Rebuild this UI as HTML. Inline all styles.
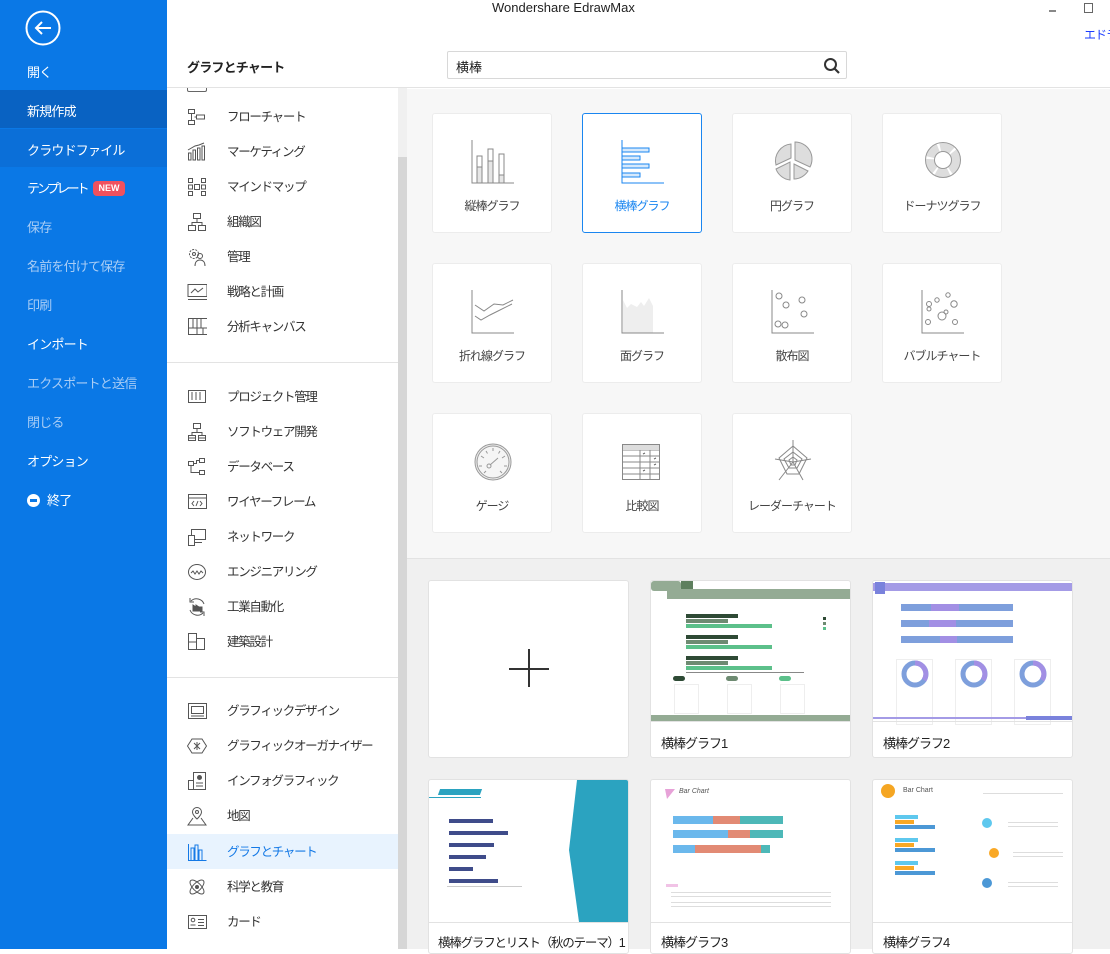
<!DOCTYPE html>
<html><head><meta charset="utf-8"><style>
*{margin:0;padding:0;box-sizing:border-box}
body{width:1110px;height:949px;overflow:hidden;position:relative;background:#fff;font-family:"Liberation Sans","Noto Sans CJK JP",sans-serif;color:#333;white-space:nowrap}
.abs{position:absolute}
#side{left:0;top:0;width:167px;height:949px;background:#0a78e6}
#side .it{position:absolute;left:27px;font-size:13px;letter-spacing:-0.8px;color:#fff;line-height:20px}
#side .dim{color:#a9cdf5}
.band{position:absolute;left:0;width:167px;height:38px}
#cat .ci{position:absolute;left:187px;height:20px;font-size:12.5px;letter-spacing:-1.3px;color:#333;line-height:20px;width:210px}
#cat .ci svg{position:absolute;left:0;top:0}
#cat .ci span{position:absolute;left:40px;top:0}
.card{position:absolute;width:120px;height:120px;background:#fff;border:1px solid #ececec;border-radius:3px}
.card .lb{position:absolute;left:0;right:0;top:83px;text-align:center;font-size:12px;letter-spacing:-1px;color:#444}
.card svg{position:absolute;left:36px;top:24px}
.tp{position:absolute;width:201px;background:#fff;border:1px solid #e2e2e2;border-radius:3px;overflow:hidden}
.tp .lb{position:absolute;left:10px;font-size:13px;letter-spacing:-1px;color:#222}
.ln{position:absolute;height:1px;background:#ddd}
</style></head><body>

<div id="side" class="abs">
  <svg class="abs" style="left:25px;top:10px" width="36" height="36" viewBox="0 0 36 36"><circle cx="18" cy="18" r="16.5" fill="none" stroke="#fff" stroke-width="2"/><path d="M26 18H11M17 12l-6 6 6 6" fill="none" stroke="#fff" stroke-width="2"/></svg>
  <div class="band" style="top:90px;background:#0962c2"></div>
  <div class="band" style="top:129px;background:#0b6fd8;height:38px"></div>
  <div class="it" style="top:63px">開く</div>
  <div class="it" style="top:102px">新規作成</div>
  <div class="it" style="top:141px">クラウドファイル</div>
  <div class="it" style="top:179px;letter-spacing:-3px">テンプレート</div>
  <div class="abs" style="left:93px;top:181px;width:32px;height:15px;background:#f0515e;border-radius:4px;color:#fff;font-size:9px;font-weight:bold;line-height:15px;text-align:center">NEW</div>
  <div class="it dim" style="top:218px">保存</div>
  <div class="it dim" style="top:257px">名前を付けて保存</div>
  <div class="it dim" style="top:296px">印刷</div>
  <div class="it" style="top:335px">インポート</div>
  <div class="it dim" style="top:374px">エクスポートと送信</div>
  <div class="it dim" style="top:413px">閉じる</div>
  <div class="it" style="top:452px">オプション</div>
  <div class="abs" style="left:27px;top:494px;width:13px;height:13px;border-radius:50%;background:#fff"><div style="position:absolute;left:3px;top:5px;width:7px;height:3px;background:#0a78e6"></div></div>
  <div class="it" style="top:491px;left:47px">終了</div>
</div>

<div class="abs" style="left:167px;top:0;width:943px;height:88px;background:#fff;border-bottom:1px solid #e3e3e3"></div>
<div class="abs" style="left:492px;top:0;font-size:13px;color:#222">Wondershare EdrawMax</div>
<div class="abs" style="left:1049px;top:10px;width:7px;height:2px;background:#888"></div>
<div class="abs" style="left:1084px;top:3px;width:9px;height:10px;border:1px solid #666"></div>
<div class="abs" style="left:1084px;top:26px;font-size:12px;letter-spacing:-1px;color:#1a3cff">エドラ</div>
<div class="abs" style="left:187px;top:57px;font-size:13px;letter-spacing:-0.8px;font-weight:bold;color:#222">グラフとチャート</div>
<div class="abs" style="left:447px;top:51px;width:400px;height:28px;border:1px solid #d8d8d8;border-radius:2px;background:#fff">
  <div class="abs" style="left:8px;top:5px;font-size:13px;color:#222">横棒</div>
  <svg class="abs" style="left:375px;top:5px" width="18" height="18" viewBox="0 0 18 18"><circle cx="7.5" cy="7.5" r="5.5" fill="none" stroke="#333" stroke-width="2"/><path d="M11.5 11.5L16 16" stroke="#333" stroke-width="2.2"/></svg>
</div>

<div id="cat">
  <div class="abs" style="left:187px;top:88px;width:20px;height:4px;border:1px solid #666;border-top:none;border-radius:0 0 2px 2px"></div>
  <div class="abs" style="left:398px;top:88px;width:9px;height:861px;background:#f0f0f0"></div>
  <div class="abs" style="left:398px;top:157px;width:9px;height:792px;background:#d6d6d6"></div>
  <div class="abs" style="left:167px;top:362px;width:231px;height:1px;background:#e3e3e3"></div>
  <div class="abs" style="left:167px;top:677px;width:231px;height:1px;background:#e3e3e3"></div>
  <div class="abs" style="left:167px;top:834px;width:231px;height:35px;background:#e8f3fe"></div>

  <div class="ci" style="top:107px"><svg width="20" height="20" viewBox="0 0 20 20" fill="none" stroke="#555"><rect x="1.5" y="2.5" width="6" height="4"/><rect x="1.5" y="13.5" width="6" height="4"/><rect x="9.5" y="8" width="8" height="4"/><path d="M4.5 6.5v7M7.5 10h2"/></svg><span>フローチャート</span></div>
  <div class="ci" style="top:142px"><svg width="20" height="20" viewBox="0 0 20 20" fill="none" stroke="#555"><rect x="1.5" y="11" width="2.5" height="7"/><rect x="6" y="8" width="2.5" height="10"/><rect x="10.5" y="6" width="2.5" height="12"/><rect x="15" y="4" width="2.5" height="14"/><path d="M1 8L8 4l4-1 5-2"/></svg><span>マーケティング</span></div>
  <div class="ci" style="top:177px"><svg width="20" height="20" viewBox="0 0 20 20" fill="none" stroke="#555"><rect x="1.5" y="1.5" width="4" height="4"/><rect x="14.5" y="1.5" width="4" height="4"/><rect x="1.5" y="14.5" width="4" height="4"/><rect x="14.5" y="14.5" width="4" height="4"/><rect x="7.5" y="7.5" width="5" height="5"/><rect x="1.5" y="8" width="4" height="4"/><rect x="14.5" y="8" width="4" height="4"/></svg><span>マインドマップ</span></div>
  <div class="ci" style="top:212px"><svg width="20" height="20" viewBox="0 0 20 20" fill="none" stroke="#555"><rect x="6.5" y="1.5" width="7" height="5"/><rect x="1.5" y="13.5" width="7" height="5"/><rect x="11.5" y="13.5" width="7" height="5"/><path d="M10 6.5v4M5 13.5v-3h10v3"/></svg><span>組織図</span></div>
  <div class="ci" style="top:247px"><svg width="20" height="20" viewBox="0 0 20 20" fill="none" stroke="#555"><circle cx="7" cy="7" r="4.5" stroke-dasharray="2 1.2"/><circle cx="7" cy="7" r="1.5"/><circle cx="13" cy="9" r="2.5"/><path d="M8 19c0-4 2-6 5-6s5 2 5 6"/></svg><span>管理</span></div>
  <div class="ci" style="top:282px"><svg width="20" height="20" viewBox="0 0 20 20" fill="none" stroke="#555"><rect x="1" y="2.5" width="19" height="12"/><path d="M1 17.5h19M4 11l4-4 3 3 5-4"/></svg><span>戦略と計画</span></div>
  <div class="ci" style="top:317px"><svg width="20" height="20" viewBox="0 0 20 20" fill="none" stroke="#555"><rect x="1.5" y="1.5" width="19" height="16"/><path d="M1.5 11h19M6 1.5v10M10 1.5v16M14 1.5v10M16 11v6.5"/></svg><span>分析キャンバス</span></div>

  <div class="ci" style="top:387px"><svg width="20" height="20" viewBox="0 0 20 20" fill="none" stroke="#555"><rect x="1.5" y="3.5" width="17" height="12"/><path d="M5 7v6M9 7v6M13 7v6M4 6h2M8 6h2M12 6h2"/></svg><span>プロジェクト管理</span></div>
  <div class="ci" style="top:422px"><svg width="20" height="20" viewBox="0 0 20 20" fill="none" stroke="#555"><rect x="6.5" y="1.5" width="7" height="5"/><rect x="1.5" y="13.5" width="7" height="5"/><rect x="11.5" y="13.5" width="7" height="5"/><path d="M10 6.5v4M5 13.5v-3h10v3M1.5 16h7M11.5 16h7"/></svg><span>ソフトウェア開発</span></div>
  <div class="ci" style="top:457px"><svg width="20" height="20" viewBox="0 0 20 20" fill="none" stroke="#555"><rect x="1.5" y="4.5" width="5" height="4"/><rect x="12.5" y="1.5" width="5" height="4"/><rect x="12.5" y="13.5" width="5" height="4"/><path d="M6.5 6.5h3v-3h3M4 8.5v7h8.5"/></svg><span>データベース</span></div>
  <div class="ci" style="top:492px"><svg width="20" height="20" viewBox="0 0 20 20" fill="none" stroke="#555"><rect x="1.5" y="2.5" width="18" height="14"/><path d="M1.5 6h18M7 9l-2 2.5 2 2.5M13 9l2 2.5-2 2.5M11 9l-2 5"/></svg><span>ワイヤーフレーム</span></div>
  <div class="ci" style="top:527px"><svg width="20" height="20" viewBox="0 0 20 20" fill="none" stroke="#555"><rect x="4.5" y="2.5" width="14" height="10"/><rect x="1.5" y="8.5" width="6" height="10" fill="#fff"/><path d="M8 15.5h7"/></svg><span>ネットワーク</span></div>
  <div class="ci" style="top:562px"><svg width="20" height="20" viewBox="0 0 20 20" fill="none" stroke="#555"><ellipse cx="10" cy="10" rx="8.5" ry="7.5"/><path d="M4 11l2-2 2 3 2-3 2 3 2-3 2 2"/></svg><span>エンジニアリング</span></div>
  <div class="ci" style="top:597px"><svg width="20" height="20" viewBox="0 0 20 20" fill="none" stroke="#555"><path d="M4 4a8 8 0 0 1 13 3M16 16a8 8 0 0 1-13-3M3 1v4h4M17 19v-4h-4"/><path d="M6 14V8l3 2V8l3 2h3v4z" fill="#555"/></svg><span>工業自動化</span></div>
  <div class="ci" style="top:632px"><svg width="20" height="20" viewBox="0 0 20 20" fill="none" stroke="#555"><path d="M1.5 1.5h8v5h8v11h-16zM1.5 10h8v7.5M9.5 6.5v3"/></svg><span>建築設計</span></div>

  <div class="ci" style="top:701px"><svg width="20" height="20" viewBox="0 0 20 20" fill="none" stroke="#555"><rect x="1.5" y="2.5" width="18" height="15"/><rect x="4.5" y="5.5" width="12" height="7"/><path d="M4 15h13"/></svg><span>グラフィックデザイン</span></div>
  <div class="ci" style="top:736px"><svg width="20" height="20" viewBox="0 0 20 20" fill="none" stroke="#555"><path d="M5 3h10l4.5 7-4.5 7H5L.5 10z"/><path d="M7 7l6 6M13 7l-6 6M10 6v8"/></svg><span>グラフィックオーガナイザー</span></div>
  <div class="ci" style="top:771px"><svg width="20" height="20" viewBox="0 0 20 20" fill="none" stroke="#555"><rect x="6.5" y="1.5" width="12" height="17"/><path d="M1.5 9.5h5v9h-5zM9 12h7M9 15h7"/><circle cx="12.5" cy="6.5" r="2" fill="#555"/></svg><span>インフォグラフィック</span></div>
  <div class="ci" style="top:806px"><svg width="20" height="20" viewBox="0 0 20 20" fill="none" stroke="#555"><path d="M10 13s-4.5-4-4.5-7a4.5 4.5 0 0 1 9 0c0 3-4.5 7-4.5 7z"/><circle cx="10" cy="6" r="1.5"/><path d="M6 12l-5 7h18l-5-7"/></svg><span>地図</span></div>
  <div class="ci" style="top:842px;color:#1479e6"><svg width="20" height="20" viewBox="0 0 20 20" fill="none" stroke="#1479e6"><path d="M1.5 2v16.5h18"/><rect x="4" y="6" width="3" height="12.5"/><rect x="8" y="3" width="3" height="15.5"/><rect x="12" y="8" width="3" height="10.5"/></svg><span>グラフとチャート</span></div>
  <div class="ci" style="top:877px"><svg width="20" height="20" viewBox="0 0 20 20" fill="none" stroke="#555"><ellipse cx="10" cy="10" rx="9" ry="4" transform="rotate(45 10 10)"/><ellipse cx="10" cy="10" rx="9" ry="4" transform="rotate(-45 10 10)"/><circle cx="10" cy="10" r="1.5" fill="#555"/></svg><span>科学と教育</span></div>
  <div class="ci" style="top:912px"><svg width="20" height="20" viewBox="0 0 20 20" fill="none" stroke="#555"><rect x="1.5" y="3.5" width="18" height="13"/><circle cx="6" cy="8" r="1.8"/><path d="M3.5 13h5M11 7.5h6M11 10.5h6M11 13.5h6"/></svg><span>カード</span></div>
</div>

<div class="abs" style="left:407px;top:89px;width:703px;height:470px;background:#f7f7f7;border-bottom:1px solid #e3e3e3"></div>
<div class="abs" style="left:407px;top:559px;width:703px;height:390px;background:#f0f0f0"></div>

<div class="card" style="left:432px;top:113px"><svg width="48" height="48" viewBox="0 0 48 48" fill="none" stroke="#888"><path d="M3 2v43h42"/><rect x="8" y="18" width="5" height="27"/><rect x="19" y="11" width="5" height="34"/><rect x="30" y="16" width="5" height="29"/><path d="M8 29h5M19 23h5M30 37h5"/><path d="M8.5 29.5h4v15h-4zM19.5 23.5h4v21h-4zM30.5 37.5h4v7h-4z" fill="#e6e6e6" stroke="none"/></svg><div class="lb">縦棒グラフ</div></div>
<div class="card" style="left:582px;top:113px;border:1px solid #1a86f0"><svg width="48" height="48" viewBox="0 0 48 48" fill="none" stroke="#1a86f0"><path d="M3 2v43h42"/><rect x="3" y="10" width="27" height="4" fill="#d6e9fc"/><rect x="3" y="18" width="18" height="4" fill="#d6e9fc"/><rect x="3" y="26" width="27" height="4" fill="#d6e9fc"/><rect x="3" y="35" width="18" height="4" fill="#d6e9fc"/></svg><div class="lb" style="color:#1a86f0">横棒グラフ</div></div>
<div class="card" style="left:732px;top:113px"><svg width="48" height="48" viewBox="0 0 48 48" stroke="#999" fill="#ddd"><path d="M26 4a17 17 0 0 1 15 25L26 22z"/><path d="M22 6L22 20 7 27A17 17 0 0 1 22 6z"/><path d="M7 31l14-7v18A17 17 0 0 1 7 31z"/><path d="M25 26l14 7A17 17 0 0 1 25 41z"/></svg><div class="lb">円グラフ</div></div>
<div class="card" style="left:882px;top:113px"><svg width="48" height="48" viewBox="0 0 48 48" fill="none"><circle cx="24" cy="22" r="13" stroke="#ddd" stroke-width="9" stroke-dasharray="12.5 2"/><circle cx="24" cy="22" r="17.5" stroke="#999"/><circle cx="24" cy="22" r="8.5" stroke="#999"/></svg><div class="lb">ドーナツグラフ</div></div>

<div class="card" style="left:432px;top:263px"><svg width="48" height="48" viewBox="0 0 48 48" fill="none" stroke="#888"><path d="M3 2v43h42"/><path d="M6 17l9 6 10-7 9 1 10-5M6 28l6 4 9-5 8-4 14-7"/></svg><div class="lb">折れ線グラフ</div></div>
<div class="card" style="left:582px;top:263px"><svg width="48" height="48" viewBox="0 0 48 48" fill="none" stroke="#888"><path d="M4 12l4 8 4-4 6 3 4-5 3 4 5-8 4 8v27H4z" fill="#eee" stroke="none"/><path d="M3 2v43h42"/></svg><div class="lb">面グラフ</div></div>
<div class="card" style="left:732px;top:263px"><svg width="48" height="48" viewBox="0 0 48 48" fill="none" stroke="#888"><path d="M3 2v43h42"/><circle cx="10" cy="8" r="3"/><circle cx="17" cy="17" r="3"/><circle cx="33" cy="12" r="3"/><circle cx="35" cy="26" r="3"/><circle cx="9" cy="36" r="3"/><circle cx="16" cy="37" r="3"/></svg><div class="lb">散布図</div></div>
<div class="card" style="left:882px;top:263px"><svg width="48" height="48" viewBox="0 0 48 48" fill="none" stroke="#888"><path d="M3 2v43h42"/><circle cx="10" cy="16" r="2.5"/><circle cx="10" cy="21" r="2"/><circle cx="18" cy="12" r="2.2"/><circle cx="29" cy="7" r="2.2"/><circle cx="35" cy="16" r="3.2"/><circle cx="23" cy="28" r="4"/><circle cx="27" cy="24" r="2"/><circle cx="9" cy="34" r="2.5"/><circle cx="36" cy="34" r="2.5"/></svg><div class="lb">バブルチャート</div></div>

<div class="card" style="left:432px;top:413px"><svg width="48" height="48" viewBox="0 0 48 48" fill="none" stroke="#999"><circle cx="24" cy="24" r="18" fill="#eee"/><circle cx="24" cy="24" r="16" fill="#f5f5f5"/><path d="M24 10v3M12 18l3 2M36 18l-3 2M10 28h3M35 28h3M15 35l2-2M33 35l-2-2M17 13l1.5 2.5M31 13l-1.5 2.5"/><circle cx="20" cy="28" r="2"/><path d="M21 27l8-7"/></svg><div class="lb">ゲージ</div></div>
<div class="card" style="left:582px;top:413px"><svg width="48" height="48" viewBox="0 0 48 48" fill="none" stroke="#888"><rect x="3.5" y="6.5" width="37" height="35"/><path d="M3.5 12h37M3.5 18h37M3.5 24h37M3.5 30h37M3.5 36h37M21 6.5v35M31 6.5v35"/><rect x="4" y="7" width="36" height="5" fill="#ddd" stroke="none"/><path d="M24 16l2-1M35 21l2-1M35 27l2-1M24 33l2-1" stroke="#666"/></svg><div class="lb">比較図</div></div>
<div class="card" style="left:732px;top:413px"><svg width="48" height="48" viewBox="0 0 48 48" fill="none" stroke="#888"><path d="M24 2v22M24 24l18-3M24 24l10 18M24 24l-14 18M24 24L6 21"/><path d="M24 8l14 12-8 16H18L10 20z"/><path d="M24 14l9 7-5 9h-8l-5-9z"/><path d="M24 19l4 3-2 5h-4l-2-5z"/></svg><div class="lb">レーダーチャート</div></div>

<div class="tp" style="left:428px;top:580px;height:178px">
  <div class="abs" style="left:80px;top:87px;width:40px;height:1.5px;background:#333"></div>
  <div class="abs" style="left:99px;top:68px;width:1.5px;height:38px;background:#333"></div>
</div>

<div class="tp" style="left:650px;top:580px;height:178px">
  <div class="abs" style="left:16px;top:8px;width:184px;height:10px;background:#94ab94"></div>
  <div class="abs" style="left:0;top:0;width:30px;height:10px;background:#94ab94;border-radius:3px"></div>
  <div class="abs" style="left:30px;top:0;width:12px;height:8px;background:#5e7f5e"></div>
  <div class="abs" style="left:35px;top:33px;width:52px;height:4px;background:#2e4a35"></div>
  <div class="abs" style="left:35px;top:38px;width:42px;height:4px;background:#6e8b72"></div>
  <div class="abs" style="left:35px;top:43px;width:86px;height:4px;background:#5cc08a"></div>
  <div class="abs" style="left:35px;top:54px;width:52px;height:4px;background:#2e4a35"></div>
  <div class="abs" style="left:35px;top:59px;width:42px;height:4px;background:#6e8b72"></div>
  <div class="abs" style="left:35px;top:64px;width:86px;height:4px;background:#5cc08a"></div>
  <div class="abs" style="left:35px;top:75px;width:52px;height:4px;background:#2e4a35"></div>
  <div class="abs" style="left:35px;top:80px;width:42px;height:4px;background:#6e8b72"></div>
  <div class="abs" style="left:35px;top:85px;width:86px;height:4px;background:#5cc08a"></div>
  <div class="abs" style="left:35px;top:91px;width:118px;height:1px;background:#888"></div>
  <div class="abs" style="left:172px;top:36px;width:3px;height:3px;background:#2e4a35"></div>
  <div class="abs" style="left:172px;top:41px;width:3px;height:3px;background:#6e8b72"></div>
  <div class="abs" style="left:172px;top:46px;width:3px;height:3px;background:#5cc08a"></div>
  <div class="abs" style="left:22px;top:95px;width:12px;height:5px;background:#2e4a35;border-radius:3px"></div>
  <div class="abs" style="left:75px;top:95px;width:12px;height:5px;background:#6e8b72;border-radius:3px"></div>
  <div class="abs" style="left:128px;top:95px;width:12px;height:5px;background:#5cc08a;border-radius:3px"></div>
  <div class="abs" style="left:23px;top:103px;width:25px;height:30px;border:1px solid #eee"></div>
  <div class="abs" style="left:76px;top:103px;width:25px;height:30px;border:1px solid #eee"></div>
  <div class="abs" style="left:129px;top:103px;width:25px;height:30px;border:1px solid #eee"></div>
  <div class="abs" style="left:0;top:134px;width:201px;height:6px;background:#94ab94"></div>
  <div class="abs" style="left:0;top:140px;width:201px;height:1px;background:#e2e2e2"></div>
  <div class="lb" style="top:152px">横棒グラフ1</div>
</div>

<div class="tp" style="left:872px;top:580px;height:178px">
  <div class="abs" style="left:0;top:2px;width:201px;height:8px;background:#a49be6"></div>
  <div class="abs" style="left:2px;top:1px;width:10px;height:12px;background:#7a82dc"></div>
  <div class="abs" style="left:28px;top:23px;width:112px;height:7px;background:#7e9fdc"></div>
  <div class="abs" style="left:58px;top:23px;width:28px;height:7px;background:#a28fe4"></div>
  <div class="abs" style="left:28px;top:39px;width:112px;height:7px;background:#7e9fdc"></div>
  <div class="abs" style="left:56px;top:39px;width:27px;height:7px;background:#a28fe4"></div>
  <div class="abs" style="left:28px;top:55px;width:112px;height:7px;background:#7e9fdc"></div>
  <div class="abs" style="left:67px;top:55px;width:17px;height:7px;background:#a28fe4"></div>
  <div class="abs" style="left:23px;top:78px;width:37px;height:66px;border:1px solid #eee"></div>
  <div class="abs" style="left:82px;top:78px;width:37px;height:66px;border:1px solid #eee"></div>
  <div class="abs" style="left:141px;top:78px;width:37px;height:66px;border:1px solid #eee"></div>
  <svg class="abs" style="left:20px;top:78px" width="165" height="40" viewBox="0 0 165 40" fill="none"><circle cx="22" cy="15" r="11" stroke="#7e9fdc" stroke-width="5"/><circle cx="81" cy="15" r="11" stroke="#7e9fdc" stroke-width="5"/><circle cx="140" cy="15" r="11" stroke="#7e9fdc" stroke-width="5"/><path d="M22 4a11 11 0 0 1 9 17M81 4a11 11 0 0 1 9 17M140 4a11 11 0 0 1 9 17" stroke="#a28fe4" stroke-width="5"/></svg>
  <div class="abs" style="left:0;top:136px;width:201px;height:2px;background:#a49be6"></div>
  <div class="abs" style="left:153px;top:135px;width:48px;height:4px;background:#7a82dc"></div>
  <div class="abs" style="left:0;top:140px;width:201px;height:1px;background:#e2e2e2"></div>
  <div class="lb" style="top:152px">横棒グラフ2</div>
</div>

<div class="tp" style="left:428px;top:779px;height:175px">
  <div class="abs" style="left:10px;top:9px;width:42px;height:6px;background:#2ba3c0;transform:skewX(-20deg)"></div>
  <div class="abs" style="left:0;top:17px;width:52px;height:1px;background:#2ba3c0"></div>
  <svg class="abs" style="left:0;top:0" width="201" height="142"><path d="M148 0H201V142H150L140 70z" fill="#2ba3c0"/></svg>
  <div class="abs" style="left:20px;top:39px;width:44px;height:4px;background:#3f4c8a"></div>
  <div class="abs" style="left:20px;top:51px;width:59px;height:4px;background:#3f4c8a"></div>
  <div class="abs" style="left:20px;top:63px;width:45px;height:4px;background:#3f4c8a"></div>
  <div class="abs" style="left:20px;top:75px;width:37px;height:4px;background:#3f4c8a"></div>
  <div class="abs" style="left:20px;top:87px;width:24px;height:4px;background:#3f4c8a"></div>
  <div class="abs" style="left:20px;top:99px;width:49px;height:4px;background:#3f4c8a"></div>
  <div class="abs" style="left:18px;top:106px;width:75px;height:1px;background:#ccc"></div>
  <div class="abs" style="left:0;top:142px;width:201px;height:1px;background:#e2e2e2"></div>
  <div class="lb" style="top:152px;left:9px;font-size:12.5px;letter-spacing:-1.2px">横棒グラフとリスト（秋のテーマ）1</div>
</div>

<div class="tp" style="left:650px;top:779px;height:175px">
  <svg class="abs" style="left:14px;top:9px" width="10" height="10"><path d="M0 0h10L2 10z" fill="#e7a2d8"/></svg>
  <div class="abs" style="left:28px;top:8px;font-size:7px;font-style:italic;color:#555">Bar Chart</div>
  <div class="abs" style="left:22px;top:36px;width:40px;height:8px;background:#6bb8ec"></div>
  <div class="abs" style="left:62px;top:36px;width:27px;height:8px;background:#e28a74"></div>
  <div class="abs" style="left:89px;top:36px;width:43px;height:8px;background:#4db8b8"></div>
  <div class="abs" style="left:22px;top:50px;width:55px;height:8px;background:#6bb8ec"></div>
  <div class="abs" style="left:77px;top:50px;width:22px;height:8px;background:#e28a74"></div>
  <div class="abs" style="left:99px;top:50px;width:33px;height:8px;background:#4db8b8"></div>
  <div class="abs" style="left:22px;top:65px;width:22px;height:8px;background:#6bb8ec"></div>
  <div class="abs" style="left:44px;top:65px;width:66px;height:8px;background:#e28a74"></div>
  <div class="abs" style="left:110px;top:65px;width:9px;height:8px;background:#4db8b8"></div>
  <div class="abs" style="left:15px;top:104px;width:12px;height:3px;background:#f1c3e6"></div>
  <div class="ln" style="left:20px;top:112px;width:160px"></div>
  <div class="ln" style="left:20px;top:116px;width:160px"></div>
  <div class="ln" style="left:20px;top:122px;width:160px"></div>
  <div class="ln" style="left:20px;top:126px;width:160px"></div>
  <div class="abs" style="left:0;top:142px;width:201px;height:1px;background:#e2e2e2"></div>
  <div class="lb" style="top:152px">横棒グラフ3</div>
</div>

<div class="tp" style="left:872px;top:779px;height:175px;background:#fff">
  <div class="abs" style="left:8px;top:4px;width:14px;height:14px;border-radius:50%;background:#f5a623"></div>
  <div class="abs" style="left:30px;top:7px;font-size:7px;color:#555">Bar Chart</div>
  <div class="ln" style="left:110px;top:13px;width:80px"></div>
  <div class="abs" style="left:22px;top:35px;width:23px;height:4px;background:#5ec8ee"></div>
  <div class="abs" style="left:22px;top:40px;width:19px;height:4px;background:#f9a825"></div>
  <div class="abs" style="left:22px;top:45px;width:40px;height:4px;background:#4c98d6"></div>
  <div class="abs" style="left:22px;top:58px;width:23px;height:4px;background:#5ec8ee"></div>
  <div class="abs" style="left:22px;top:63px;width:19px;height:4px;background:#f9a825"></div>
  <div class="abs" style="left:22px;top:68px;width:40px;height:4px;background:#4c98d6"></div>
  <div class="abs" style="left:22px;top:81px;width:23px;height:4px;background:#5ec8ee"></div>
  <div class="abs" style="left:22px;top:86px;width:19px;height:4px;background:#f9a825"></div>
  <div class="abs" style="left:22px;top:91px;width:40px;height:4px;background:#4c98d6"></div>
  <div class="abs" style="left:109px;top:38px;width:10px;height:10px;border-radius:50%;background:#5ec8ee"></div>
  <div class="abs" style="left:116px;top:68px;width:10px;height:10px;border-radius:50%;background:#f9a825"></div>
  <div class="abs" style="left:109px;top:98px;width:10px;height:10px;border-radius:50%;background:#4c98d6"></div>
  <div class="ln" style="left:135px;top:42px;width:50px"></div>
  <div class="ln" style="left:135px;top:46px;width:50px"></div>
  <div class="ln" style="left:140px;top:72px;width:50px"></div>
  <div class="ln" style="left:140px;top:76px;width:50px"></div>
  <div class="ln" style="left:135px;top:102px;width:50px"></div>
  <div class="ln" style="left:135px;top:106px;width:50px"></div>
  <div class="abs" style="left:0;top:142px;width:201px;height:1px;background:#e2e2e2"></div>
  <div class="lb" style="top:152px">横棒グラフ4</div>
</div>

</body></html>
